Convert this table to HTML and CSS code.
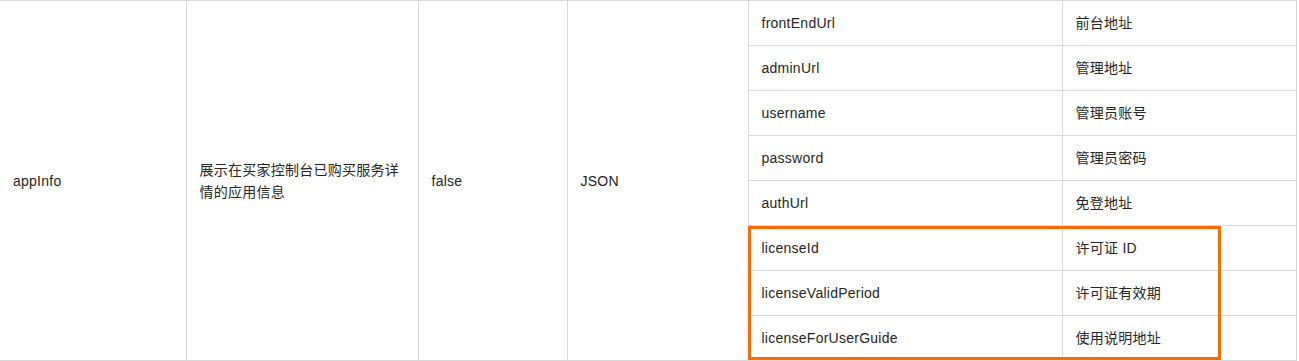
FILE: index.html
```html
<!DOCTYPE html>
<html lang="zh-CN">

<head>
    <meta charset="UTF-8" />
    <meta name="viewport" content="width=device-width, initial-scale=1.0" />
    <title>appInfo 参数说明</title>
    <link rel="stylesheet" href="styles.css">
</head>

<body>
    <div class="wrap">
        <table class="param-table">
            <colgroup>
                <col class="c-name">
                <col class="c-desc">
                <col class="c-req">
                <col class="c-type">
                <col class="c-key">
                <col class="c-val">
            </colgroup>
            <tbody>
                <tr>
                    <td rowspan="8">appInfo</td>
                    <td rowspan="8">展示在买家控制台已购买服务详情的应用信息</td>
                    <td rowspan="8">false</td>
                    <td rowspan="8">JSON</td>
                    <td>frontEndUrl</td>
                    <td>前台地址</td>
                </tr>
                <tr>
                    <td>adminUrl</td>
                    <td>管理地址</td>
                </tr>
                <tr>
                    <td>username</td>
                    <td>管理员账号</td>
                </tr>
                <tr>
                    <td>password</td>
                    <td>管理员密码</td>
                </tr>
                <tr>
                    <td>authUrl</td>
                    <td>免登地址</td>
                </tr>
                <tr>
                    <td>licenseId</td>
                    <td>许可证 ID</td>
                </tr>
                <tr>
                    <td>licenseValidPeriod</td>
                    <td>许可证有效期</td>
                </tr>
                <tr>
                    <td>licenseForUserGuide</td>
                    <td>使用说明地址</td>
                </tr>
            </tbody>
        </table>
        <!-- highlight around the new license fields -->
        <div class="mark"></div>
    </div>
</body>

</html>
```

FILE: styles.css
```css
body {
    margin: 0;
    background-color: #ffffff;
    color: #262626;
    font-family: "Liberation Sans", Arial, "Noto Sans CJK SC", sans-serif;
    font-size: 14px;
    letter-spacing: 0.25px;
}

.wrap {
    position: relative;
    width: 1296px;
}

.param-table {
    width: 1296px;
    border-collapse: collapse;
    table-layout: fixed;
}

.c-name { width: 186px; }
.c-desc { width: 232px; }
.c-req { width: 149px; }
.c-type { width: 181px; }
.c-key { width: 314px; }
.c-val { width: 234px; }

.param-table td {
    border: 1px solid #d9d9d9;
    padding: 11px 13px;
    line-height: 22px;
    vertical-align: middle;
    text-align: left;
}

.param-table tr:first-child td:first-child {
    border-left: none;
    padding-left: 13px;
}

.mark {
    position: absolute;
    left: 748px;
    top: 226px;
    width: 467px;
    height: 128px;
    border: 3px solid #ff6a00;
}
```
